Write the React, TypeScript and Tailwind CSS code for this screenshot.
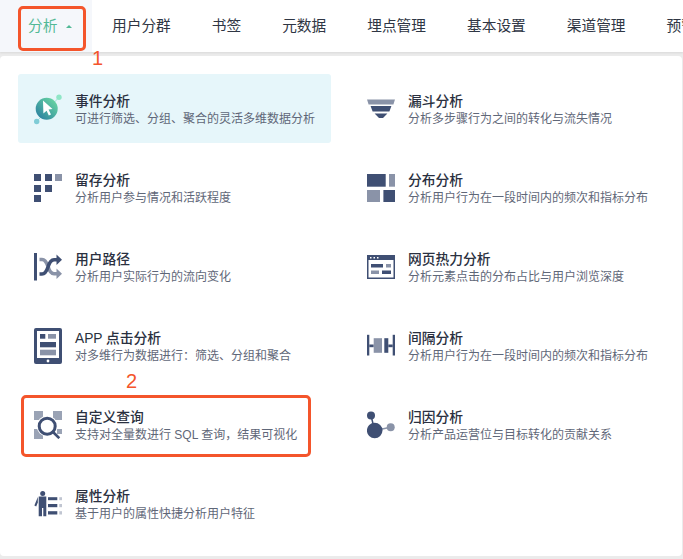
const dark = "#3f4f73";
const light = "#8a93a8";

const EventIcon = () => (
	<svg width="28" height="28" viewBox="0 0 28 28" className="overflow-visible">
		<defs>
			<linearGradient id="eventGrad" x1="1" y1="0" x2="0" y2="1">
				<stop offset="0" stopColor="#6fe0a2" />
				<stop offset="1" stopColor="#2578a0" />
			</linearGradient>
		</defs>
		<line x1="25" y1="2.2" x2="2.7" y2="26.5" stroke="#8fdccf" strokeWidth="0.8" />
		<circle cx="25" cy="2.2" r="2.7" fill="#8fe6c6" />
		<circle cx="2.7" cy="26.5" r="2.7" fill="#7fccd6" />
		<circle cx="12.7" cy="13.8" r="11" fill="url(#eventGrad)" />
		<path d="M9 5.5 L18.5 14 L14.6 14.6 L17 19.4 L14.8 20.5 L12.6 15.8 L9.4 18.6 Z" fill="#fff" />
	</svg>
);

const FunnelIcon = () => (
	<svg width="28" height="28" viewBox="0 0 28 28">
		<path d="M0 4.5H28L26.4 9.5H1.6Z" fill={light} />
		<path d="M3.6 11H24.4L22.4 16.5H5.6Z" fill={dark} />
		<path d="M7.6 18.5H20.4L16 23H12Z" fill={dark} />
	</svg>
);

const RetentionIcon = () => (
	<svg width="28" height="28" viewBox="0 0 28 28">
		<rect x="0" y="0" width="7" height="7" fill={dark} />
		<rect x="11" y="0" width="7" height="7" fill={dark} />
		<rect x="21" y="0" width="7" height="7" fill={light} />
		<rect x="0" y="11" width="7" height="7" fill={dark} />
		<rect x="11" y="11" width="7" height="7" fill={dark} />
		<rect x="0" y="21" width="7" height="7" fill={dark} />
	</svg>
);

const DistributionIcon = () => (
	<svg width="28" height="28" viewBox="0 0 28 28">
		<rect x="0" y="0" width="18.7" height="12.7" fill={dark} />
		<rect x="22" y="0" width="6" height="12.7" fill={light} />
		<rect x="0" y="16" width="13" height="12" fill={light} />
		<rect x="16.4" y="16" width="11.6" height="12" fill={dark} />
	</svg>
);

const PathIcon = () => (
	<svg width="28" height="28" viewBox="0 0 28 28">
		<rect x="0" y="0" width="3" height="27.5" fill={dark} />
		<path d="M5.5 6.5H8C11 6.5 12.5 9 14 13.5C15.5 18.5 17.5 20.7 20 20.7H24" fill="none" stroke={light} strokeWidth="3.6" />
		<path d="M22.5 15.5L28 20.7L22.5 26Z" fill={light} />
		<path d="M5.5 21H8C11 21 12.5 18.5 14 14C15.5 9 17.5 6.7 20 6.7H24" fill="none" stroke={dark} strokeWidth="3.6" />
		<path d="M22.5 1.5L28 6.7L22.5 12Z" fill={dark} />
	</svg>
);

const HeatmapIcon = () => (
	<svg width="28" height="28" viewBox="0 0 28 28">
		<rect x="0.75" y="2.75" width="26.5" height="22.5" fill="#fff" stroke={dark} strokeWidth="1.5" />
		<rect x="0" y="2" width="28" height="5" fill={dark} />
		<rect x="3" y="4" width="1.5" height="1.5" fill="#fff" />
		<rect x="6.5" y="4" width="1.5" height="1.5" fill="#fff" />
		<rect x="10" y="4" width="1.5" height="1.5" fill="#fff" />
		<rect x="4" y="11" width="12" height="3.5" fill={dark} />
		<rect x="19" y="11" width="5" height="3.5" fill={light} />
		<rect x="4" y="17.5" width="8" height="3.5" fill={light} />
		<rect x="15" y="17.5" width="9" height="3.5" fill={dark} />
	</svg>
);

const AppIcon = () => (
	<svg width="28" height="36" viewBox="0 0 28 36" className="shrink-0">
		<rect x="0" y="0" width="28" height="36" rx="2" fill={dark} />
		<rect x="3" y="3" width="22" height="27" fill="#fff" />
		<rect x="6" y="6" width="5.3" height="4.7" fill={dark} />
		<rect x="14" y="6" width="8" height="4.7" fill={light} />
		<rect x="6" y="14" width="16" height="5.3" fill={dark} />
		<rect x="6" y="21.7" width="16" height="5.6" fill={light} />
		<circle cx="14" cy="33" r="1.4" fill="#fff" />
	</svg>
);

const IntervalIcon = () => (
	<svg width="28" height="28" viewBox="0 0 28 28">
		<rect x="0" y="2.8" width="2.3" height="20.7" fill={dark} />
		<rect x="2.3" y="12.5" width="4.4" height="2.7" fill={dark} />
		<rect x="6.7" y="6.2" width="8.3" height="14.6" fill={light} />
		<rect x="17.3" y="6.2" width="4" height="14.6" fill={dark} />
		<rect x="21.3" y="12.5" width="4.4" height="2.7" fill={dark} />
		<rect x="25.7" y="2.8" width="2.3" height="20.7" fill={dark} />
	</svg>
);

const QueryIcon = () => (
	<svg width="28" height="28" viewBox="0 0 28 28">
		<rect x="0" y="0" width="9" height="9" fill="#9aa3b5" />
		<rect x="19" y="0" width="9" height="9" fill="#9aa3b5" />
		<rect x="0" y="18" width="9" height="10" fill="#9aa3b5" />
		<rect x="23" y="18" width="5" height="5" fill="#9aa3b5" />
		<circle cx="13.2" cy="15.2" r="10.5" fill="#fff" />
		<circle cx="13.2" cy="15.2" r="8" fill="none" stroke={dark} strokeWidth="3" />
		<line x1="19" y1="21" x2="25.3" y2="27.2" stroke={dark} strokeWidth="2.6" />
	</svg>
);

const AttributionIcon = () => (
	<svg width="28" height="28" viewBox="0 0 28 28">
		<line x1="4" y1="4.5" x2="7.7" y2="19.5" stroke={dark} strokeWidth="1.5" />
		<line x1="7.7" y1="19.5" x2="23.7" y2="16.2" stroke={light} strokeWidth="1.5" />
		<circle cx="7.7" cy="19.5" r="7.8" fill={dark} />
		<circle cx="4" cy="4.5" r="4" fill={dark} />
		<circle cx="23.7" cy="16.2" r="4" fill={light} />
	</svg>
);

const PropertyIcon = () => (
	<svg width="28" height="28" viewBox="0 0 28 28">
		<circle cx="8.7" cy="3.5" r="2.5" fill={dark} />
		<path d="M4.7 6.6H12.3V26.2H9.3V18H8V26.2H4.7Z" fill={dark} />
		<path d="M3.8 7L0.4 15.5L2.2 16.4L3.8 12.5Z" fill={dark} />
		<rect x="14" y="7.2" width="9.3" height="3" fill={dark} />
		<rect x="14" y="14" width="9.3" height="3.2" fill={dark} />
		<rect x="14" y="21.2" width="9.3" height="3.3" fill={dark} />
		<rect x="25.3" y="7.2" width="2.7" height="3" fill="#c0c5d1" />
		<rect x="25.3" y="14" width="2.7" height="3.2" fill="#c0c5d1" />
		<rect x="25.3" y="21.2" width="2.7" height="3.3" fill="#c0c5d1" />
	</svg>
);

const navItems = ["用户分群", "书签", "元数据", "埋点管理", "基本设置", "渠道管理", "预警"];

const menuItems = [
	{ title: "事件分析", desc: "可进行筛选、分组、聚合的灵活多维数据分析", icon: <EventIcon />, active: true },
	{ title: "漏斗分析", desc: "分析多步骤行为之间的转化与流失情况", icon: <FunnelIcon /> },
	{ title: "留存分析", desc: "分析用户参与情况和活跃程度", icon: <RetentionIcon /> },
	{ title: "分布分析", desc: "分析用户行为在一段时间内的频次和指标分布", icon: <DistributionIcon /> },
	{ title: "用户路径", desc: "分析用户实际行为的流向变化", icon: <PathIcon /> },
	{ title: "网页热力分析", desc: "分析元素点击的分布占比与用户浏览深度", icon: <HeatmapIcon /> },
	{ title: "APP 点击分析", desc: "对多维行为数据进行：筛选、分组和聚合", icon: <AppIcon /> },
	{ title: "间隔分析", desc: "分析用户行为在一段时间内的频次和指标分布", icon: <IntervalIcon /> },
	{ title: "自定义查询", desc: "支持对全量数进行 SQL 查询，结果可视化", icon: <QueryIcon /> },
	{ title: "归因分析", desc: "分析产品运营位与目标转化的贡献关系", icon: <AttributionIcon /> },
	{ title: "属性分析", desc: "基于用户的属性快捷分析用户特征", icon: <PropertyIcon /> },
];

const App = () => {
	return (
		<div className="relative h-[559px] w-[683px] overflow-hidden bg-[#ebebeb] font-['Liberation_Sans','Noto_Sans_CJK_SC',sans-serif]">
			<header className="flex h-[52px] items-center overflow-hidden whitespace-nowrap bg-white shadow-[0_1px_2px_rgba(0,0,0,0.08)]">
				<div className="flex h-full w-[92px] shrink-0 items-center bg-[#f5f7fb] pl-[28px] text-[14.7px] text-[#52b996]">
					分析
					<span className="ml-[9px] h-0 w-0 border-x-[3px] border-b-[3px] border-x-transparent border-b-[#52b996]" />
				</div>
				<nav className="ml-[20px] flex gap-[41px] text-[14.7px] text-[#2f3644]">
					{navItems.map((item) => (
						<span key={item}>{item}</span>
					))}
				</nav>
			</header>

			<main className="mt-[4px] h-[500px] w-[682px] rounded-[4px] bg-white pl-[18px] pt-[18px]">
				<div className="grid grid-cols-[313px_313px] auto-rows-[69px] gap-x-[20px] gap-y-[10px]">
					{menuItems.map((item) => (
						<div
							key={item.title}
							className={`flex items-center gap-[13px] rounded-[3px] px-4 ${item.active ? "bg-[#e6f6fa]" : ""}`}
						>
							<div className="flex h-[28px] w-[28px] shrink-0 items-center justify-center">{item.icon}</div>
							<div className="whitespace-nowrap pt-[4px]">
								<h3 className="text-[13.75px] font-medium leading-[18px] text-[#2a3040]">{item.title}</h3>
								<p className="text-[12px] leading-[17px] text-[#5f6778]">{item.desc}</p>
							</div>
						</div>
					))}
				</div>
			</main>

			{/* annotations drawn over the screenshot */}
			<div className="absolute left-[18px] top-[6px] h-[45px] w-[68px] rounded-[5px] border-[3px] border-[#f4552b]" />
			<span className="absolute left-[92px] top-[45px] text-[20px] leading-[26px] text-[#f4552b]">1</span>
			<div className="absolute left-[21px] top-[395px] h-[62px] w-[290px] rounded-[5px] border-[3px] border-[#f4552b]" />
			<span className="absolute left-[126px] top-[368px] text-[20px] leading-[26px] text-[#f4552b]">2</span>
		</div>
	);
};

export default App;
